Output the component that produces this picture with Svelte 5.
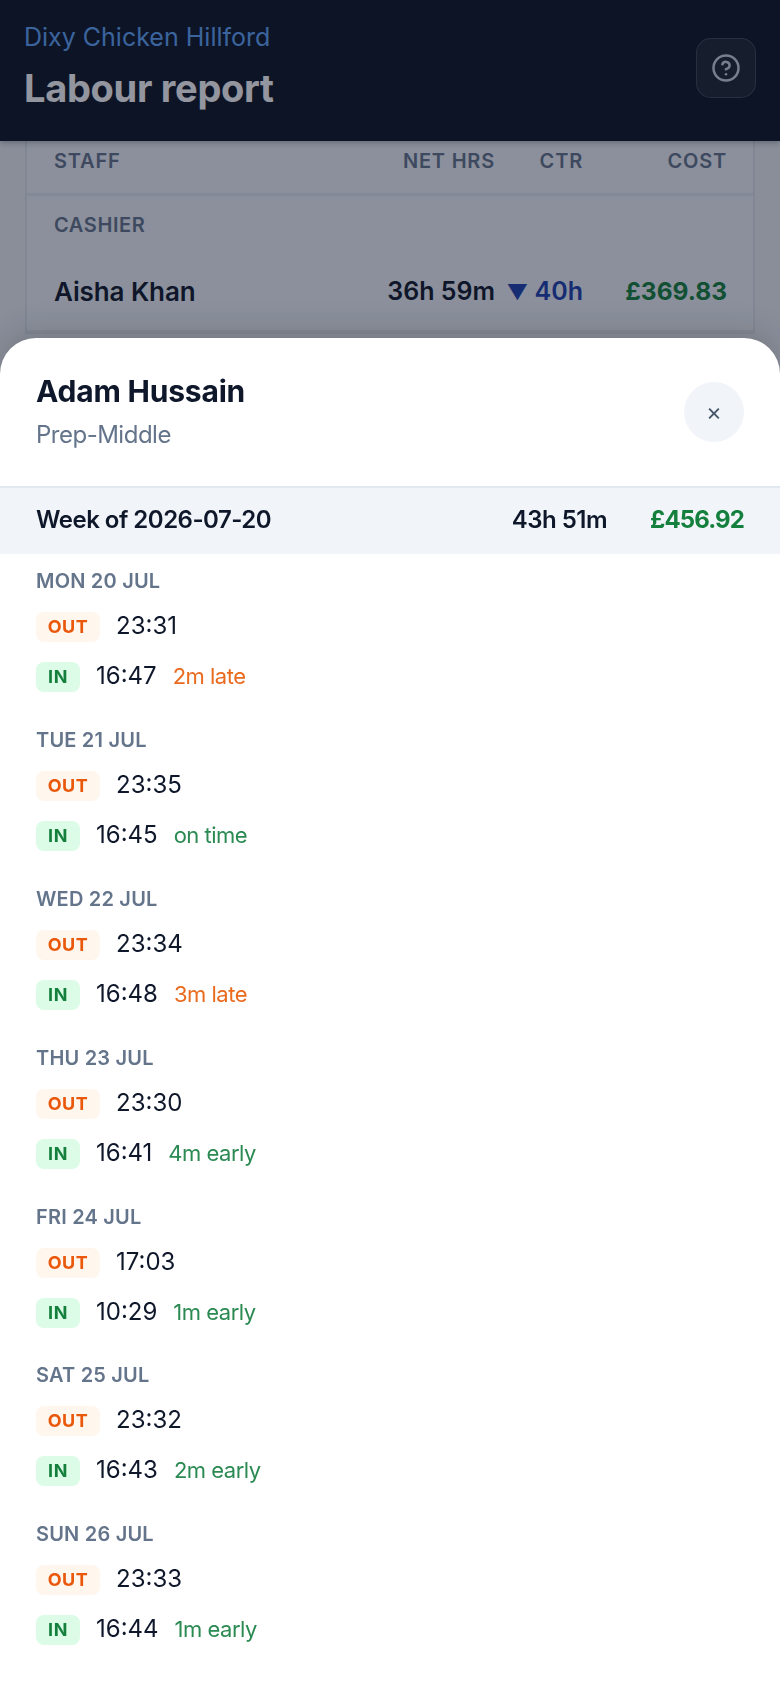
<script>
    const days = [
        { label: 'MON 20 JUL', out: '23:31', in: '16:47', note: '2m late', late: true },
        { label: 'TUE 21 JUL', out: '23:35', in: '16:45', note: 'on time' },
        { label: 'WED 22 JUL', out: '23:34', in: '16:48', note: '3m late', late: true },
        { label: 'THU 23 JUL', out: '23:30', in: '16:41', note: '4m early' },
        { label: 'FRI 24 JUL', out: '17:03', in: '10:29', note: '1m early' },
        { label: 'SAT 25 JUL', out: '23:32', in: '16:43', note: '2m early' },
        { label: 'SUN 26 JUL', out: '23:33', in: '16:44', note: '1m early' }
    ];
</script>

<div class="page">
    <header>
        <div>
            <div class="site">Dixy Chicken Hillford</div>
            <h1>Labour report</h1>
        </div>
        <button class="help" aria-label="Help">
            <svg width="30" height="30" viewBox="0 0 24 24" fill="none" stroke="currentColor" stroke-width="2" stroke-linecap="round" stroke-linejoin="round">
                <circle cx="12" cy="12" r="10" />
                <path d="M9.1 9a3 3 0 0 1 5.8 1c0 2-3 3-3 3" />
                <path d="M12 17h.01" />
            </svg>
        </button>
    </header>

    <div class="card">
        <div class="row head">
            <span class="name">STAFF</span>
            <span class="hrs">NET HRS</span>
            <span class="ctr">CTR</span>
            <span class="cost">COST</span>
        </div>
        <div class="group">CASHIER</div>
        <div class="row staff">
            <span class="name big">Aisha Khan</span>
            <span class="hrs">36h 59m</span>
            <span class="ctr blue"><span class="tri">▼</span> 40h</span>
            <span class="cost green">£369.83</span>
        </div>
    </div>
</div>

<div class="backdrop"></div>

<div class="sheet">
    <div class="top">
        <div>
            <h2>Adam Hussain</h2>
            <div class="role">Prep-Middle</div>
        </div>
        <button class="close" aria-label="Close">×</button>
    </div>
    <div class="week">
        <span class="wk">Week of 2026-07-20</span>
        <span class="total">43h 51m</span>
        <span class="sum">£456.92</span>
    </div>
    <div class="days">
        {#each days as d}
            <div class="day">
                <div class="date">{d.label}</div>
                <div class="punch">
                    <span class="badge out">OUT</span>
                    <span class="time">{d.out}</span>
                </div>
                <div class="punch">
                    <span class="badge in">IN</span>
                    <span class="time">{d.in}</span>
                    <span class="note" class:late={d.late}>{d.note}</span>
                </div>
            </div>
        {/each}
    </div>
</div>

<style>
    :global(body) {
        background: #eef1f5;
        font-family: Inter, "Noto Sans", sans-serif;
        color: #0f172a;
    }

    .page {
        height: 1688px;
        overflow: hidden;
    }

    header {
        height: 141px;
        box-sizing: border-box;
        background: #0b1322;
        padding: 21px 24px 0 24px;
        display: flex;
        justify-content: space-between;
        align-items: flex-start;
        box-shadow: 0 2px 6px rgba(15, 23, 42, 0.3);
        position: relative;
    }

    .site {
        font-size: 25px;
        line-height: 32px;
        color: #60a5fa;
    }

    h1 {
        margin: 11px 0 0;
        font-size: 38px;
        line-height: 48px;
        font-weight: 700;
        color: #fff;
        letter-spacing: -0.3px;
    }

    .help {
        width: 60px;
        height: 60px;
        margin-top: 17px;
        border-radius: 15px;
        border: 1px solid rgba(255, 255, 255, 0.15);
        background: rgba(255, 255, 255, 0.07);
        color: #cbd5e1;
        display: flex;
        align-items: center;
        justify-content: center;
        padding: 0;
    }

    .card {
        margin: 0 25px;
        background: #f1f5f9;
        border: 2px solid #dfe4ea;
        border-top: none;
    }

    .row {
        display: flex;
        align-items: center;
        padding: 0 26px 0 27px;
    }

    .name {
        flex: 1;
    }

    .big {
        font-size: 26px;
        letter-spacing: -0.1px;
    }

    .hrs {
        width: 170px;
        text-align: right;
    }

    .ctr {
        width: 88px;
        text-align: right;
    }

    .cost {
        width: 144px;
        text-align: right;
    }

    .head {
        height: 55px;
        padding-bottom: 12px;
        box-sizing: border-box;
        font-size: 20px;
        font-weight: 600;
        letter-spacing: 0.8px;
        color: #64748b;
        border-bottom: 3px solid #e2e8f0;
    }

    .group {
        padding: 12px 27px 0;
        height: 34px;
        line-height: 34px;
        font-size: 20px;
        font-weight: 600;
        letter-spacing: 0.6px;
        color: #64748b;
    }

    .staff {
        height: 90px;
        box-sizing: border-box;
        padding-top: 10px;
        font-size: 25px;
        font-weight: 600;
        color: #0f172a;
        border-bottom: 2px solid #e2e8f0;
    }

    .blue {
        color: #1e40af;
    }

    .tri {
        font-size: 21px;
    }

    .green {
        color: #15803d;
        font-weight: 700;
        font-size: 24.5px;
    }

    .backdrop {
        position: fixed;
        inset: 0;
        background: rgba(15, 23, 42, 0.45);
    }

    .sheet {
        position: fixed;
        left: 0;
        right: 0;
        top: 338px;
        bottom: 0;
        background: #fff;
        border-radius: 36px 36px 0 0;
        box-shadow: 0 -8px 30px rgba(0, 0, 0, 0.15);
        overflow: hidden;
    }

    .top {
        height: 148px;
        box-sizing: border-box;
        padding: 33px 36px 0;
        display: flex;
        justify-content: space-between;
        align-items: flex-start;
    }

    h2 {
        margin: 0;
        font-size: 30px;
        line-height: 40px;
        font-weight: 700;
        letter-spacing: -0.2px;
    }

    .role {
        margin-top: 8px;
        font-size: 24px;
        line-height: 32px;
        color: #64748b;
        letter-spacing: -0.5px;
    }

    .close {
        width: 60px;
        height: 60px;
        margin-top: 11px;
        border: none;
        border-radius: 50%;
        background: #f1f5f9;
        color: #475569;
        font-family: inherit;
        font-size: 24px;
        line-height: 1;
        padding: 0;
    }

    .week {
        height: 63px;
        padding: 0 36px 3px;
        display: flex;
        align-items: center;
        background: #f1f5f9;
        border-top: 2px solid #e2e8f0;
        font-size: 24px;
        font-weight: 600;
        letter-spacing: -0.5px;
    }

    .wk {
        flex: 1;
    }

    .sum {
        margin-left: 43px;
        font-weight: 700;
        color: #15803d;
        letter-spacing: -0.9px;
    }

    .days {
        padding: 13px 36px 0;
    }

    .day {
        height: 158.9px;
    }

    .date {
        font-size: 20px;
        line-height: 28px;
        font-weight: 600;
        letter-spacing: 0.2px;
        color: #64748b;
    }

    .punch {
        display: flex;
        align-items: center;
        height: 30px;
        margin-top: 20px;
        font-size: 24px;
    }

    .date + .punch {
        margin-top: 17px;
    }

    .badge {
        height: 30px;
        line-height: 30px;
        border-radius: 8px;
        font-size: 18px;
        font-weight: 700;
        letter-spacing: 0.5px;
        text-align: center;
    }

    .out {
        width: 64px;
        background: #fff7ed;
        color: #ea580c;
    }

    .in {
        width: 44px;
        background: #dcfce7;
        color: #15803d;
    }

    .time {
        margin: 0 0 3px 16px;
        color: #0f172a;
    }

    .note {
        margin: 0 0 2px 16px;
        font-size: 22px;
        color: #2b8a52;
        letter-spacing: -0.5px;
    }

    .note.late {
        color: #ea6a1e;
    }
</style>
